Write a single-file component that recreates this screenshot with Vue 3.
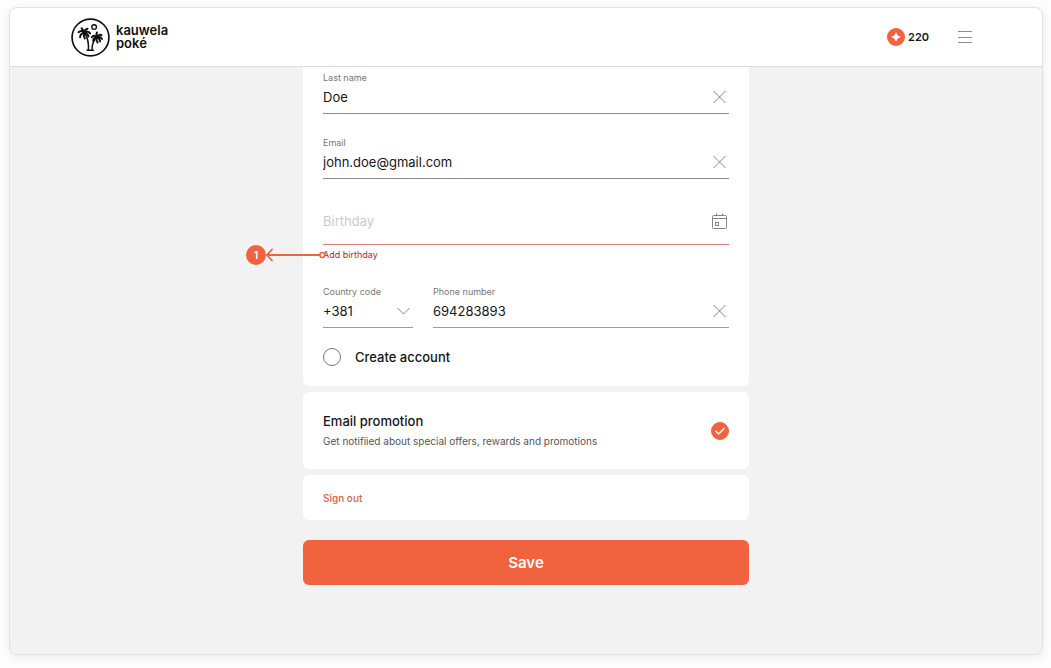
<script setup>
import { ref } from 'vue'

const lastName = ref('Doe')
const email = ref('john.doe@gmail.com')
const birthday = ref('')
const countryCode = ref('+381')
const phone = ref('694283893')
const createAccount = ref(false)
const promotion = ref(true)
</script>

<template>
  <div class="page">
    <div class="window">
      <header class="header">
        <a class="brand" href="#">
          <svg class="emblem" viewBox="0 0 40 40" fill="none" stroke="#111" stroke-linecap="round" stroke-linejoin="round" aria-hidden="true">
            <circle cx="20" cy="20" r="18.9" stroke-width="1.7" />
            <circle cx="23.7" cy="9.3" r="2.4" stroke-width="1.4" />
            <path stroke-width="1.6" d="M14.2 15.5c3 5 4.200 11 3.600 17.500M26 20c-3 3.500-4.600 8-4.500 13M16.500 33h6.500" />
            <path stroke-width="2" d="M13.800 15.300C12 12.800 9.800 12.600 7.800 14.600M13.800 15.300C11 15.500 9.400 17 9.300 19.800M13.800 15.300C12.800 17.400 13 19 14.200 21M13.800 15.300C13.200 12.600 12.200 11.400 10.800 10.600M13.800 15.300C14.200 12.600 15.400 11.200 17 11M13.800 15.300C16.200 13.600 18.200 14 19.600 15.800M13.800 15.300C16.400 15.800 17.600 17 18 19" />
            <path stroke-width="2" d="M26.300 19.600C24.400 17.600 22.800 17.800 21.400 19.600M26.300 19.600C24 20 22.600 21.400 22.800 23.600M26.300 19.600C25.800 21.600 26.200 23.400 27.200 25M26.300 19.600C25.800 17.400 25.800 16.200 26.600 14.800M26.300 19.600C28 17.200 29.800 16.600 31.200 17.600M26.300 19.600C28.800 18.800 30.800 19.600 31.800 21.400M26.300 19.600C28.800 20.600 29.800 22 29.800 24" />
          </svg>
          <span class="brand-name">kauwela<br />poké</span>
        </a>
        <div class="header-right">
          <div class="points">
            <svg viewBox="0 0 18 18" aria-hidden="true">
              <circle cx="9" cy="9" r="9" fill="#f1623e" />
              <path fill="#fff" d="M9 3.800C9.700 7 11 8.300 14.200 9 11 9.700 9.700 11 9 14.200 8.300 11 7 9.700 3.800 9 7 8.300 8.300 7 9 3.800z" />
            </svg>
            <span>220</span>
          </div>
          <button class="icon-button menu" type="button" aria-label="Menu">
            <svg viewBox="0 0 14 14" stroke="#8c8c8c" stroke-width="1" aria-hidden="true">
              <path d="M0 1.500h14M0 7.500h14M0 12.500h14" />
            </svg>
          </button>
        </div>
      </header>

      <main class="content">
        <form class="form" @submit.prevent>
          <section class="card details">
            <div class="field">
              <label for="last-name">Last name</label>
              <div class="row">
                <input id="last-name" v-model="lastName" type="text" />
                <button class="icon-button" type="button" aria-label="Clear last name" @click="lastName = ''">
                  <svg viewBox="0 0 20 20" class="glyph" aria-hidden="true"><path d="M4.500 4l12 12M16.500 4l-12 12" /></svg>
                </button>
              </div>
            </div>

            <div class="field spaced">
              <label for="email">Email</label>
              <div class="row">
                <input id="email" v-model="email" type="email" />
                <button class="icon-button" type="button" aria-label="Clear email" @click="email = ''">
                  <svg viewBox="0 0 20 20" class="glyph" aria-hidden="true"><path d="M4.500 4l12 12M16.500 4l-12 12" /></svg>
                </button>
              </div>
            </div>

            <div class="field spaced invalid">
              <div class="row">
                <input id="birthday" v-model="birthday" type="text" placeholder="Birthday" aria-label="Birthday" aria-describedby="birthday-error" />
                <button class="icon-button" type="button" aria-label="Choose a date">
                  <svg viewBox="0 0 20 20" class="glyph" aria-hidden="true">
                    <rect x="3.500" y="4.500" width="14" height="13" rx="1" />
                    <path d="M3.500 7.500h14M7.500 2.500v2M13.500 2.500v2" />
                    <rect x="6.500" y="11.500" width="3" height="3" />
                  </svg>
                </button>
              </div>
            </div>
            <div class="error">
              <span id="birthday-error">Add birthday</span>
              <div class="marker">
                <span class="badge">1</span>
                <svg viewBox="0 0 60 14" fill="none" stroke="#f1623e" aria-hidden="true">
                  <path stroke-width="1.800" stroke-linecap="round" stroke-linejoin="round" d="M6 1.500L0.800 7 6 12.500M0.800 7H54" />
                  <circle cx="56.300" cy="7" r="2.400" stroke-width="1.500" fill="#fff" />
                </svg>
              </div>
            </div>

            <div class="phone">
              <div class="field">
                <label for="country-code">Country code</label>
                <div class="row">
                  <select id="country-code" v-model="countryCode">
                    <option>+381</option>
                    <option>+385</option>
                  </select>
                  <svg viewBox="0 0 20 20" class="glyph chevron" aria-hidden="true"><path d="M4.500 7l6 6 6-6" /></svg>
                </div>
              </div>
              <div class="field">
                <label for="phone">Phone number</label>
                <div class="row">
                  <input id="phone" v-model="phone" type="tel" />
                  <button class="icon-button" type="button" aria-label="Clear phone number" @click="phone = ''">
                    <svg viewBox="0 0 20 20" class="glyph" aria-hidden="true"><path d="M4.500 4l12 12M16.500 4l-12 12" /></svg>
                  </button>
                </div>
              </div>
            </div>

            <label class="create">
              <span class="tick">
                <input v-model="createAccount" type="checkbox" />
                <svg viewBox="0 0 18 18" aria-hidden="true"><path d="M5 9.300l2.700 2.700 5.300-5.500" /></svg>
              </span>
              <span>Create account</span>
            </label>
          </section>

          <section class="card promotion-card">
            <label class="promotion">
              <span class="promotion-text">
                <strong>Email promotion</strong>
                <span>Get notifiied about special offers, rewards and promotions</span>
              </span>
              <span class="tick">
                <input v-model="promotion" type="checkbox" />
                <svg viewBox="0 0 18 18" aria-hidden="true"><path d="M5 9.300l2.700 2.700 5.300-5.500" /></svg>
              </span>
            </label>
          </section>

          <section class="card sign-out">
            <a href="#">Sign out</a>
          </section>

          <button class="save" type="submit">Save</button>
        </form>
      </main>
    </div>
  </div>
</template>

<style>
body {
  margin: 0;
  background: #fdfdfd;
}
</style>

<style scoped>
* {
  box-sizing: border-box;
}

.page {
  display: flex;
  min-height: 100vh;
  padding: 7px 8px 13px 9px;
  font-family: Inter, "Liberation Sans", sans-serif;
  color: #161616;
}

.window {
  flex: 1;
  display: flex;
  flex-direction: column;
  border: 1px solid #e2e2e2;
  border-radius: 8px;
  background: #f2f2f2;
  box-shadow: 0 2px 10px rgba(0, 0, 0, 0.08);
}

.header {
  display: flex;
  align-items: center;
  justify-content: space-between;
  height: 59px;
  padding: 0 70px 0 61px;
  border-bottom: 1px solid #dcdcdc;
  border-radius: 8px 8px 0 0;
  background: #fff;
}

.brand {
  display: flex;
  align-items: center;
  gap: 6px;
  color: #111;
  text-decoration: none;
}

.emblem {
  width: 39px;
  height: 39px;
}

.brand-name {
  font-size: 13px;
  line-height: 13px;
  font-weight: 600;
}

.header-right {
  display: flex;
  align-items: center;
  gap: 29px;
}

.points {
  display: flex;
  align-items: center;
  gap: 3px;
  font-size: 11px;
  font-weight: 600;
}

.points svg {
  width: 18px;
  height: 18px;
}

.icon-button {
  display: flex;
  flex: none;
  padding: 0;
  border: 0;
  background: none;
  cursor: pointer;
}

.menu svg {
  width: 14px;
  height: 14px;
}

.content {
  display: flex;
  justify-content: center;
  padding: 0 16px 68px;
}

.form {
  flex: 1;
  max-width: 446px;
  display: flex;
  flex-direction: column;
  gap: 6px;
}

.card {
  padding: 20px;
  border-radius: 6px;
  background: #fff;
}

.details {
  padding-top: 4px;
  padding-bottom: 19px;
  border-radius: 0 0 6px 6px;
}

.field {
  border-bottom: 1px solid #8a8a8a;
  padding-bottom: 4px;
}

.field label {
  display: block;
  font-size: 9px;
  line-height: 14px;
  color: #777;
}

.spaced {
  margin-top: 22px;
}

.row {
  position: relative;
  display: flex;
  align-items: center;
  height: 24px;
}

.row input,
.row select {
  flex: 1;
  min-width: 0;
  width: 100%;
  height: 24px;
  padding: 0;
  border: 0;
  outline: 0;
  background: none;
  appearance: none;
  font: 400 13px/24px Inter, "Liberation Sans", sans-serif;
  color: #161616;
}

.row input::placeholder {
  color: #cbcbcb;
  opacity: 1;
}

.glyph {
  width: 20px;
  height: 20px;
  fill: none;
  stroke: #858585;
  stroke-width: 1;
}

.chevron {
  position: absolute;
  right: 0;
  top: 2px;
  pointer-events: none;
}

.invalid {
  padding: 8px 0 11px;
  border-color: #df7b75;
}

.error {
  position: relative;
  margin-top: 3px;
  font-size: 9px;
  line-height: 14px;
  color: #b3282d;
}

.marker {
  position: absolute;
  top: -3px;
  left: -77px;
  display: flex;
  align-items: center;
}

.badge {
  width: 20px;
  height: 20px;
  border-radius: 50%;
  background: #f1623e;
  color: #fff;
  font-size: 10px;
  font-weight: 600;
  line-height: 20px;
  text-align: center;
}

.marker svg {
  width: 60px;
  height: 14px;
}

.phone {
  display: grid;
  grid-template-columns: 90px 1fr;
  gap: 20px;
  margin-top: 23px;
}

.phone .field {
  border-color: #9c9c9c;
}

.create {
  display: flex;
  align-items: center;
  gap: 14px;
  height: 20px;
  margin-top: 19px;
  font-size: 13px;
  font-weight: 500;
}

.tick {
  position: relative;
  flex: none;
  width: 18px;
  height: 18px;
}

.tick input {
  display: block;
  width: 18px;
  height: 18px;
  margin: 0;
  border: 1px solid #777;
  border-radius: 50%;
  appearance: none;
}

.tick input:checked {
  border-color: #f1623e;
  background: #f1623e;
}

.tick svg {
  position: absolute;
  inset: 0;
  display: none;
  fill: none;
  stroke: #fff;
  stroke-width: 1.5;
  stroke-linecap: round;
  stroke-linejoin: round;
  pointer-events: none;
}

.tick input:checked + svg {
  display: block;
}

.promotion-card {
  padding: 19px 20px 18px;
}

.promotion {
  display: flex;
  align-items: center;
  justify-content: space-between;
}

.promotion-text {
  display: flex;
  flex-direction: column;
  font-size: 10px;
  line-height: 20px;
  color: #555;
}

.promotion-text strong {
  font-size: 13px;
  font-weight: 500;
  color: #161616;
}

.sign-out {
  padding: 14px 20px 13px;
  font-size: 10px;
  line-height: 18px;
  font-weight: 500;
}

.sign-out a {
  color: #e0603f;
  text-decoration: none;
}

.save {
  height: 45px;
  margin-top: 14px;
  border: 0;
  border-radius: 6px;
  background: #f1623e;
  color: #fff;
  font: 600 15px Inter, "Liberation Sans", sans-serif;
  cursor: pointer;
}
</style>
